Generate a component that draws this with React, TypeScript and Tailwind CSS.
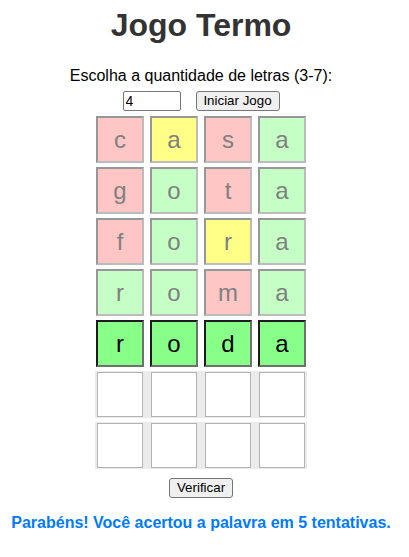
import React, { useState } from 'react';

type Cell = { letter: string; state: 'absent' | 'present' | 'correct' };

const history: Cell[][] = [
  [
    { letter: 'c', state: 'absent' },
    { letter: 'a', state: 'present' },
    { letter: 's', state: 'absent' },
    { letter: 'a', state: 'correct' },
  ],
  [
    { letter: 'g', state: 'absent' },
    { letter: 'o', state: 'correct' },
    { letter: 't', state: 'absent' },
    { letter: 'a', state: 'correct' },
  ],
  [
    { letter: 'f', state: 'absent' },
    { letter: 'o', state: 'correct' },
    { letter: 'r', state: 'present' },
    { letter: 'a', state: 'correct' },
  ],
  [
    { letter: 'r', state: 'correct' },
    { letter: 'o', state: 'correct' },
    { letter: 'm', state: 'absent' },
    { letter: 'a', state: 'correct' },
  ],
];

const lastGuess = ['r', 'o', 'd', 'a'];

const pastBg: Record<Cell['state'], string> = {
  absent: 'bg-[#ffc6c6]',
  present: 'bg-[#ffff88]',
  correct: 'bg-[#c6ffc6]',
};

export default function App() {
  const [size, setSize] = useState('4');

  return (
    <div className="w-[402px] flex flex-col items-center font-['Liberation_Sans',Arial,sans-serif] bg-white">
      <h1 className="mt-[7px] text-[32px] leading-[37px] font-bold text-[#333]">Jogo Termo</h1>

      <p className="mt-[23px] text-[16px] leading-[18px] text-black">Escolha a quantidade de letras (3-7):</p>

      {/* Controls */}
      <div className="mt-[6px] flex items-center">
        <input
          type="text"
          value={size}
          onChange={(e) => setSize(e.target.value)}
          className="w-[58px] h-[20px] px-[2px] border border-[#767676] rounded-[2px] text-[14px] text-black bg-white outline-none"
        />
        <button className="ml-[15px] w-[84px] h-[20px] border border-[#767676] rounded-[3px] bg-[#efefef] text-[13.33px] leading-[16px] text-black">
          Iniciar Jogo
        </button>
      </div>

      {/* Board */}
      <div className="mt-[5px] flex flex-col gap-[4px]">
        {history.map((row, i) => (
          <div key={i} className="flex gap-[6px]">
            {row.map((c, j) => (
              <div
                key={j}
                className={`w-[48px] h-[47px] flex items-center justify-center border-2 border-t-[#979797] border-l-[#979797] border-b-[#bcbcbc] border-r-[#bcbcbc] text-[24px] text-[#808080] ${pastBg[c.state]}`}
              >
                {c.letter}
              </div>
            ))}
          </div>
        ))}

        <div className="flex gap-[6px]">
          {lastGuess.map((l, j) => (
            <div
              key={j}
              className="w-[48px] h-[47px] flex items-center justify-center border-2 border-t-[#1c1c1c] border-l-[#1c1c1c] border-b-[#707070] border-r-[#707070] bg-[#88ff88] text-[24px] text-black"
            >
              {l}
            </div>
          ))}
        </div>

        {/* Empty rows */}
        {[0, 1].map((r) => (
          <div key={r} className="flex gap-[6px] bg-[#ebebeb] -mx-[1px] px-[1px]">
            {[0, 1, 2, 3].map((j) => (
              <div
                key={j}
                className="w-[48px] h-[47px] bg-white border border-[#ebebeb] shadow-[inset_0_0_0_1px_#b3b3b3]"
              />
            ))}
          </div>
        ))}
      </div>

      <button className="mt-[9px] w-[64px] h-[20px] border border-[#767676] rounded-[3px] bg-[#efefef] text-[13.33px] leading-[16px] text-black">
        Verificar
      </button>

      <p className="mt-[16px] text-[16px] leading-[18px] font-bold text-[#007bff]">
        Parabéns! Você acertou a palavra em 5 tentativas.
      </p>
    </div>
  );
}
